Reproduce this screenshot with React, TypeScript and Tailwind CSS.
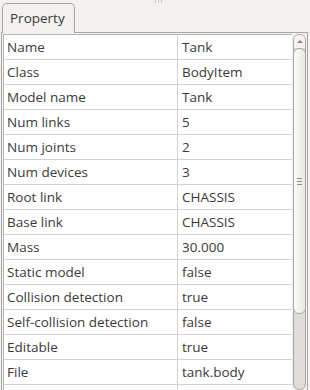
const ROWS: [string, string][] = [
  ["Name", "Tank"],
  ["Class", "BodyItem"],
  ["Model name", "Tank"],
  ["Num links", "5"],
  ["Num joints", "2"],
  ["Num devices", "3"],
  ["Root link", "CHASSIS"],
  ["Base link", "CHASSIS"],
  ["Mass", "30.000"],
  ["Static model", "false"],
  ["Collision detection", "true"],
  ["Self-collision detection", "false"],
  ["Editable", "true"],
  ["File", "tank.body"],
  ["", ""],
];

export default function App() {
  return (
    <div
      className="relative w-[310px] h-[390px] overflow-hidden bg-[#f2f1f0] text-[13.5px] text-[#3a3a3a] flex flex-col"
      style={{ fontFamily: '"Open Sans", "DejaVu Sans", sans-serif' }}
    >
      {/* splitter grip */}
      <div className="absolute top-0 left-[155px] flex gap-[2px]">
        <div className="w-[1px] h-[3px] bg-[#c8c6c2]" />
        <div className="w-[1px] h-[3px] bg-[#c8c6c2]" />
        <div className="w-[1px] h-[3px] bg-[#c8c6c2]" />
      </div>

      {/* tab bar */}
      <div className="flex pt-[3px] pl-[2px] shrink-0">
        <div className="h-[30px] pl-[7px] pr-[9px] flex items-center border border-b-0 border-[#a9a7a3] rounded-t-[5px] bg-[#f2f1f0] -mb-[1px] z-10">
          Property
        </div>
      </div>

      {/* panel */}
      <div className="flex-1 flex ml-[1px] mr-[2px] border-t border-l border-r border-[#a9a7a3] min-h-0">
        <div className="flex-1 flex pt-[1px] pl-[1px] min-h-0">
          <div className="flex-1 bg-white border-l border-t border-[#b8b6b2] overflow-hidden">
            {ROWS.map(([k, v], i) => (
              <div key={i} className="flex h-[25px] border-b border-[#d4d2ce]">
                <div className="w-[174px] shrink-0 pl-[3px] flex items-center border-r border-[#d4d2ce] whitespace-nowrap">
                  {k}
                </div>
                <div className="flex-1 pl-[4px] flex items-center whitespace-nowrap">{v}</div>
              </div>
            ))}
          </div>

          {/* scrollbar */}
          <div className="w-[15px] shrink-0 flex flex-col items-center pl-[1px] pr-[1px]">
            <div className="w-[13px] flex-1 flex flex-col rounded-[6px] border border-[#a9a7a3] bg-[#dedcd9] overflow-hidden">
              <div className="h-[13px] shrink-0 bg-[#f4f3f2] flex items-center justify-center">
                <div className="w-0 h-0 border-l-[3px] border-r-[3px] border-b-[3px] border-l-transparent border-r-transparent border-b-[#8a8884]" />
              </div>
              <div className="h-[266px] shrink-0 rounded-[6px] border border-[#a9a7a3] bg-gradient-to-r from-[#fbfbfa] to-[#e9e8e6] -mx-[1px] flex flex-col items-center justify-center gap-[2px]">
                <div className="w-[5px] h-[1px] bg-[#8f8d89]" />
                <div className="w-[5px] h-[1px] bg-[#8f8d89]" />
                <div className="w-[5px] h-[1px] bg-[#8f8d89]" />
              </div>
              <div className="flex-1" />
            </div>
          </div>
        </div>
      </div>
    </div>
  );
}
